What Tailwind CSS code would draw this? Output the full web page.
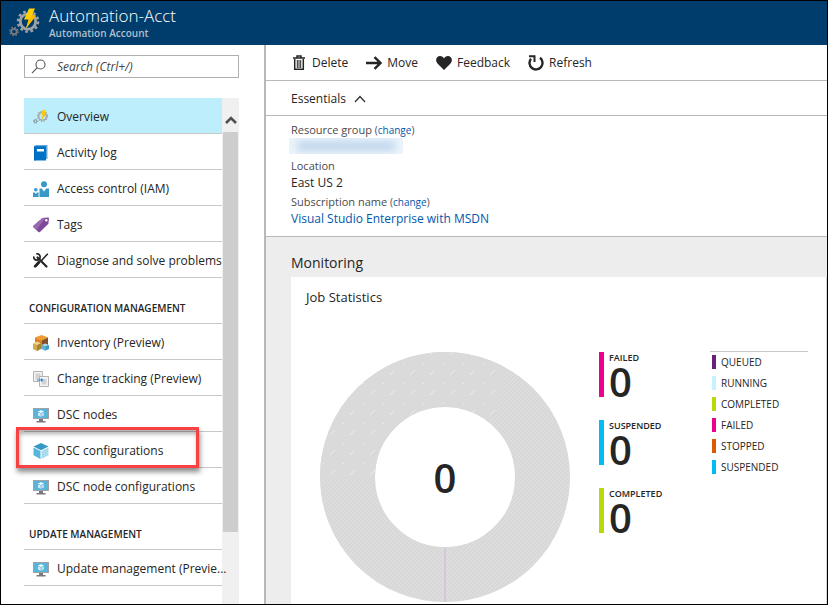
<!DOCTYPE html>
<html lang="en">
<head>
<meta charset="utf-8">
<meta name="viewport" content="width=device-width, initial-scale=1">
<title>Automation-Acct - Automation Account</title>
<script src="https://cdn.jsdelivr.net/npm/@tailwindcss/browser@4"></script>
</head>
<body class="flex h-screen flex-col overflow-hidden border border-black bg-white font-['Open_Sans','Noto_Sans',sans-serif] text-xs text-[#252525]">

<svg class="hidden" aria-hidden="true">
  <symbol id="gears" viewBox="0 0 32 32">
    <circle cx="19" cy="14.500" r="7.700" fill="none" stroke="#9fa3a7" stroke-width="2.800"/>
    <circle cx="19" cy="14.500" r="10" fill="none" stroke="#9fa3a7" stroke-width="2.600" stroke-dasharray="2.620 2.616"/>
    <circle cx="5" cy="24.500" r="2.700" fill="none" stroke="#7a7d80" stroke-width="1.700"/>
    <circle cx="5" cy="24.500" r="4.100" fill="none" stroke="#7a7d80" stroke-width="1.400" stroke-dasharray="1.6 1.62"/>
    <path d="M20 1.500h6l-3 7h4L17 21.500l2.500-9H15z" fill="#ffd000"/>
    <path d="M23 8.500h4L17 21.500l3.500-10z" fill="#ffb900"/>
  </symbol>
  <symbol id="monitor" viewBox="0 0 16 16">
    <path d="M0 1h16v11H0z" fill="#a0a1a2"/>
    <path d="M1 2h14v9H1z" fill="#59b4d9"/>
    <path d="M6 12h4v2h2.500v1.500h-9V14H6z" fill="#7a7a7a"/>
    <path d="M8 3.200l3 1.400-3 1.300-3-1.300z" fill="#fff"/>
    <path d="M5 5.200l2.700 1.200v3.400L5 8.500z" fill="#d5edf7"/>
    <path d="M11 5.200L8.300 6.400v3.400L11 8.500z" fill="#b8e0f0"/>
  </symbol>
  <symbol id="cube" viewBox="0 0 16 16">
    <path d="M8 0l7.500 3.600L8 7.200.5 3.600z" fill="#3999c6"/>
    <path d="M.5 4.400l7 3.500V16l-7-3.700z" fill="#59b4d9"/>
    <path d="M15.500 4.400l-7 3.500V16l7-3.700z" fill="#a9dbef"/>
  </symbol>
</svg>

<header class="flex h-11 shrink-0 items-center bg-[#003c6c] pl-2 text-white">
  <svg class="mr-2 size-8"><use href="#gears"/></svg>
  <div>
    <h1 class="text-[17px] leading-5 font-light">Automation-Acct</h1>
    <p class="text-[10px] leading-[15px] font-semibold text-[#b3bfcb]">Automation Account</p>
  </div>
</header>

<div class="flex min-h-0 flex-1">
  <aside class="flex w-[263px] shrink-0 flex-col pt-[10px] pr-[25px] pl-[23px]">
    <div class="mb-5 flex h-[23px] shrink-0 items-center border border-[#b0b0b0] pl-1.5">
      <label for="search" aria-label="Search" class="mr-[10px]">
        <svg class="size-4" viewBox="0 0 16 16" fill="none" stroke="#555" stroke-width="1.100"><circle cx="9.500" cy="5.500" r="4.500"/><path d="M6.300 8.700L1 14.200"/></svg>
      </label>
      <input id="search" type="search" placeholder="Search (Ctrl+/)" class="min-w-0 flex-1 italic outline-none placeholder:text-[#444]">
    </div>

    <div class="flex min-h-0 flex-1">
      <nav class="relative min-w-0 flex-1">
        <ul>
          <li class="h-9 border-b border-[#c8c8c8] bg-[#bdeefb]"><a href="#" class="flex h-full items-center gap-2 pt-0.5 pl-[9px]" aria-current="page">
            <svg class="size-4 shrink-0"><use href="#gears"/></svg>Overview</a></li>
          <li class="h-9 border-b border-[#c8c8c8]"><a href="#" class="flex h-full items-center gap-2 pt-0.5 pl-[9px]">
            <svg class="size-4 shrink-0" viewBox="0 0 16 16"><path d="M3 0h11.500v14H3z" fill="#5ea8dc"/><path d="M1 1.500L2.500 0v15.500H1z" fill="#0058ad"/><path d="M1.500 1.200H13v14.300H1.500z" fill="#0072c6"/><path d="M4 4h7v2.500H4z" fill="#fff"/></svg>Activity log</a></li>
          <li class="h-9 border-b border-[#c8c8c8]"><a href="#" class="flex h-full items-center gap-2 pt-0.5 pl-[9px]">
            <svg class="size-4 shrink-0" viewBox="0 0 16 16" fill="#3999c6"><circle cx="11" cy="3.200" r="3"/><path d="M6.500 7.500h2.200L11 10.500l2.300-3H16V16H6.500z"/><circle cx="2.800" cy="8.700" r="1.800"/><path d="M0 11.500h1.500L2.800 13l1.300-1.500h1.500V16H0z"/></svg>Access control (IAM)</a></li>
          <li class="h-9 border-b border-[#c8c8c8]"><a href="#" class="flex h-full items-center gap-2 pt-0.5 pl-[9px]">
            <svg class="size-4 shrink-0" viewBox="0 0 16 16"><path d="M9.500 1L15 .5q1 0 1 1l-.6 5.200L7 15q-.8.700-1.600 0L.5 10.200q-.7-.8 0-1.500z" fill="#804998"/><path d="M9.500 1l2.800-.3L3.500 13 .5 10.200q-.7-.8 0-1.500z" fill="#9a68b0"/><circle cx="13.300" cy="3.200" r="1.200" fill="#fff"/></svg>Tags</a></li>
          <li class="h-9 border-b border-[#c8c8c8]"><a href="#" class="flex h-full items-center gap-2 pt-0.5 pl-[9px] whitespace-nowrap">
            <svg class="size-4 shrink-0" viewBox="0 0 16 16"><path d="M14.800.8L8.500 7.500M7 9L2.500 13.800" stroke="#252525" stroke-width="1.600"/><path d="M5.800 9.200L2 13.300" stroke="#252525" stroke-width="2.600" stroke-linecap="round"/><path d="M4.500 4.500l9 9" stroke="#252525" stroke-width="2.200" stroke-linecap="round"/><path d="M3.300.8a3.200 3.200 0 1 1-2.500 2.500" fill="none" stroke="#252525" stroke-width="1.700"/></svg>Diagnose and solve problems</a></li>
        </ul>
        <h2 class="flex h-[46px] items-end border-b border-[#c8c8c8] pb-2 pl-[5px] text-[10px] leading-[14px] font-semibold">CONFIGURATION MANAGEMENT</h2>
        <ul>
          <li class="h-9 border-b border-[#c8c8c8]"><a href="#" class="flex h-full items-center gap-2 pt-0.5 pl-[9px]">
            <svg class="size-4 shrink-0" viewBox="0 0 16 16"><path d="M8.500 0L15 2.500 8.500 5.500 2 2.500z" fill="#f09a30"/><path d="M2 2.500l6.500 3V14L2 10.500z" fill="#d9801c"/><path d="M15 2.500l-6.500 3V14l6.500-3z" fill="#84502b"/><path d="M4 6.500l4 1.700-4 2-4-2z" fill="#efd488"/><path d="M0 8.200l4 2V16l-4-2z" fill="#d0ab50"/><path d="M8 8.200l-4 2V16l4-2z" fill="#a98435"/><path d="M12.200 8.500L16 10l-3.800 1.700L8.500 10z" fill="#a9dbef"/><path d="M8.500 10l3.700 1.700v4L8.500 14z" fill="#59b4d9"/><path d="M16 10l-3.800 1.700v4L16 14z" fill="#3999c6"/></svg>Inventory (Preview)</a></li>
          <li class="h-9 border-b border-[#c8c8c8]"><a href="#" class="flex h-full items-center gap-2 pt-0.5 pl-[9px]">
            <svg class="size-4 shrink-0" viewBox="0 0 16 16"><path d="M.5.500h9v10h-9z" fill="#f2f2f2" stroke="#b4b4b4"/><path d="M2.500 2.500h5v6h-5z" fill="#d2d2d2"/><path d="M6.500 5.500h9v10h-9z" fill="#f2f2f2" stroke="#b4b4b4"/><path d="M9 8h4.500v5.500H9z" fill="#d2d2d2"/><path d="M4 8.500h4V7l2.500 2L8 11V9.500H4z" fill="#2a84cf"/></svg>Change tracking (Preview)</a></li>
          <li class="h-9 border-b border-[#c8c8c8]"><a href="#" class="flex h-full items-center gap-2 pt-0.5 pl-[9px]">
            <svg class="size-4 shrink-0"><use href="#monitor"/></svg>DSC nodes</a></li>
          <li class="h-9 border-b border-[#c8c8c8]"><a href="#" class="flex h-full items-center gap-2 pt-0.5 pl-[9px]">
            <svg class="size-4 shrink-0"><use href="#cube"/></svg>DSC configurations</a></li>
          <li class="h-9 border-b border-[#c8c8c8]"><a href="#" class="flex h-full items-center gap-2 pt-0.5 pl-[9px]">
            <svg class="size-4 shrink-0"><use href="#monitor"/></svg>DSC node configurations</a></li>
        </ul>
        <h2 class="flex h-[46px] items-end border-b border-[#c8c8c8] pb-2 pl-[5px] text-[10px] leading-[14px] font-semibold">UPDATE MANAGEMENT</h2>
        <ul>
          <li class="h-9 border-b border-[#c8c8c8]"><a href="#" class="flex h-full items-center gap-2 pt-0.5 pl-[9px] whitespace-nowrap">
            <svg class="size-4 shrink-0"><use href="#monitor"/></svg>Update management (Previe...</a></li>
        </ul>
      </nav>
      <div class="flex w-[17px] shrink-0 flex-col bg-[#f0f0f0]">
        <button type="button" aria-label="Scroll up" class="flex h-[34px] shrink-0 items-end justify-center pb-2">
          <svg class="h-2 w-3" viewBox="0 0 12 8" fill="none" stroke="#505050" stroke-width="2.600"><path d="M1 7l5-5 5 5"/></svg>
        </button>
        <div class="mx-px h-[79%] bg-[#cdcdcd]"></div>
      </div>
    </div>
  </aside>
  <div class="pointer-events-none absolute top-[427px] left-4 h-[41px] w-[183px] border-3 border-[#f94144] shadow-[1px_4px_5px_rgba(0,0,0,0.45),inset_1px_4px_4px_rgba(0,0,0,0.3)]"></div>

  <main class="flex min-w-0 flex-1 flex-col border-l-2 border-[#b8b8b8]">
    <div class="flex h-9 shrink-0 items-center gap-[18px] border-b border-[#b8b8b8] pl-[27px]">
      <button type="button" class="flex items-center gap-[7px]">
        <svg class="h-4 w-3" viewBox="0 0 12 16" fill="none" stroke="#252525"><path d="M0 3h12M4 2.500V1h4v1.500" stroke-width="1.500"/><path d="M1.700 4v10.200h8.600V4" stroke-width="1.500"/><path d="M4.300 5v8M6 5v8M7.700 5v8" stroke-width="1"/></svg>Delete</button>
      <button type="button" class="flex items-center gap-[5px]">
        <svg class="h-4 w-4" viewBox="0 0 16 16" fill="none" stroke="#252525" stroke-width="2.400"><path d="M0 8h14M8.500 2.200L14.500 8l-6 5.800"/></svg>Move</button>
      <button type="button" class="flex items-center gap-[5px]">
        <svg class="h-4 w-4" viewBox="0 0 16 16" fill="#252525"><path d="M8 15L1.500 8.500C-1.500 5 .8 1 4 1c2 0 3.300 1 4 2.500C8.700 2 10 1 12 1c3.200 0 5.500 4 2.500 7.500z"/></svg>Feedback</button>
      <button type="button" class="flex items-center gap-[5px]">
        <svg class="h-4 w-4" viewBox="0 0 16 16" fill="none" stroke="#252525"><path d="M12 2.800A6.500 6.500 0 1 1 3 3.800" stroke-width="2.400"/><path d="M1 1.200h5.500V7" stroke-width="2"/></svg>Refresh</button>
    </div>
    <button type="button" class="flex h-[35px] shrink-0 items-center gap-2 border-b border-[#b8b8b8] pt-0.5 pl-[25px]">Essentials
      <svg class="h-2 w-3" viewBox="0 0 12 8" fill="none" stroke="#333" stroke-width="1.300"><path d="M1 7l5-5.500L11 7"/></svg></button>
    <dl class="h-[121px] shrink-0 border-b border-[#b8b8b8] pt-1.5 pl-[25px] leading-4">
      <dt class="text-[11px] text-[#4a4a4a]">Resource group <span class="text-[10px]">(<a href="#" class="text-[#0058ad]">change</a>)</span></dt>
      <dd class="mb-1 -ml-0.5 flex h-4 w-[114px] items-center overflow-hidden bg-[#edf4fb] px-2"><span class="h-2 flex-1 bg-[#b4cfea] blur-xs"></span></dd>
      <dt class="text-[11px] text-[#4a4a4a]">Location</dt>
      <dd class="h-5 leading-[18px]">East US 2</dd>
      <dt class="text-[11px] text-[#4a4a4a]">Subscription name <span class="text-[10px]">(<a href="#" class="text-[#0058ad]">change</a>)</span></dt>
      <dd class="h-5 leading-[18px]"><a href="#" class="text-[#0058ad]">Visual Studio Enterprise with MSDN</a></dd>
    </dl>
    <section class="flex min-h-0 flex-1 flex-col bg-[#ededed] pt-4 pl-[25px]">
      <h2 class="mb-1 text-sm leading-5">Monitoring</h2>
      <div class="min-h-0 flex-1 overflow-hidden border-r border-[#d8d8d8] bg-white pt-[10px] pl-[15px]">
        <h3 class="mb-[45px] text-[13px] leading-5">Job Statistics</h3>
        <div class="flex items-start pl-3.5">
          <svg class="mr-[29px] size-[250px] shrink-0" viewBox="0 0 250 250" role="img" aria-label="Total jobs: 0">
            <defs>
              <pattern id="hatch" width="4" height="4" patternUnits="userSpaceOnUse"><path d="M-1 1L1-1M0 4L4 0M3 5L5 3" stroke="#e2e2e2" stroke-width=".8"/></pattern>
              <pattern id="dots" width="20" height="20" patternUnits="userSpaceOnUse"><path d="M0 0h20v20H0z" fill="#dadada"/><path d="M10 23l5-5M10 3l5-5" stroke="#ebebeb" stroke-width="1"/><path d="M3 11h1v1H3z" fill="#f0f0f0"/></pattern>
              <clipPath id="upper"><path d="M0 128V0h190L175 62 130 128z"/></clipPath>
            </defs>
            <circle cx="125" cy="125" r="97.500" fill="none" stroke="#d8d8d8" stroke-width="55"/>
            <circle cx="125" cy="125" r="97.500" fill="none" stroke="url(#hatch)" stroke-width="55"/>
            <circle cx="125" cy="125" r="97.500" fill="none" stroke="url(#dots)" stroke-width="55" clip-path="url(#upper)"/>
            <path d="M125 196v54" stroke="#d5bfdc" stroke-width="1.500"/>
            <text x="125" y="141" text-anchor="middle" class="fill-[#252525] text-[40px] font-semibold">0</text>
          </svg>
          <ul class="flex w-[111px] shrink-0 flex-col gap-[23px] text-[9px] font-semibold">
            <li class="h-[45px] border-l-5 border-[#ec008c] pl-[5px] leading-[11px]"><p>FAILED</p><p class="text-[40px] leading-[38px]">0</p></li>
            <li class="h-[45px] border-l-5 border-[#00bcf2] pl-[5px] leading-[11px]"><p>SUSPENDED</p><p class="text-[40px] leading-[38px]">0</p></li>
            <li class="h-[45px] border-l-5 border-[#bad80a] pl-[5px] leading-[11px]"><p>COMPLETED</p><p class="text-[40px] leading-[38px]">0</p></li>
          </ul>
          <ul class="-mt-px mr-[18px] flex flex-1 flex-col gap-[7px] border-t border-[#c8c8c8] pt-[3px] pl-0.5 text-[10px] leading-[14px]">
            <li class="border-l-4 border-[#68217a] pl-[5px]">QUEUED</li>
            <li class="border-l-4 border-[#c7f1fc] pl-[5px]">RUNNING</li>
            <li class="border-l-4 border-[#bad80a] pl-[5px]">COMPLETED</li>
            <li class="border-l-4 border-[#ec008c] pl-[5px]">FAILED</li>
            <li class="border-l-4 border-[#dc5b00] pl-[5px]">STOPPED</li>
            <li class="border-l-4 border-[#00bcf2] pl-[5px]">SUSPENDED</li>
          </ul>
        </div>
      </div>
    </section>
  </main>
</div>
</body>
</html>
